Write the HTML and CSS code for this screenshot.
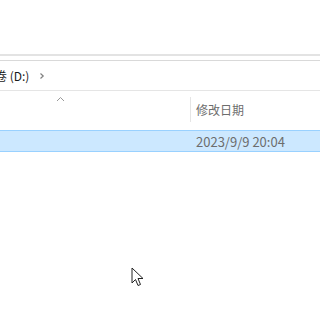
FILE: index.html
```html
<!DOCTYPE html>
<html>
<head>
<meta charset="utf-8">
<link rel="stylesheet" href="styles.css">
</head>
<body>
<div class="ribbon"></div>
<div class="gap"></div>
<div class="address">
  <span class="crumb">卷 (D:)</span>
  <svg class="chev" width="6" height="8" viewBox="0 0 6 8"><path d="M1.5 1.5 L4.2 4 L1.5 6.5" fill="none" stroke="#808080" stroke-width="1.2"/></svg>
</div>
<div class="header">
  <div class="col-name">
    <svg class="sort" width="9" height="6" viewBox="0 0 9 6"><path d="M1 5 L4.5 1.5 L8 5" fill="none" stroke="#999" stroke-width="1"/></svg>
  </div>
  <div class="col-date">修改日期</div>
</div>
<div class="row selected">
  <div class="col-name"></div>
  <div class="col-date">2023/9/9 20:04</div>
</div>
<div class="canvas">
  <svg class="cursor" width="14" height="21" viewBox="0 0 14 21"><path d="M1 1 L1 16 L4.5 12.5 L7 18.5 L9.5 17.5 L7 11.5 L12 11.5 Z" fill="#fff" stroke="#222" stroke-width="1" stroke-linejoin="miter"/></svg>
</div>
</body>
</html>
```

FILE: styles.css
```css
html, body {
  margin: 0;
  padding: 0;
  background: #fff;
  width: 320px;
  height: 320px;
  overflow: hidden;
  font-family: "Noto Sans CJK SC", "Noto Sans", sans-serif;
  font-size: 12px;
  color: #1a1a1a;
}
.ribbon {
  height: 54px;
  border-bottom: 2px solid #e3e3e3;
}
.gap {
  height: 4px;
}
.address {
  height: 29px;
  border-top: 1px solid #d9d9d9;
  border-bottom: 1px solid #e5e5e5;
  display: flex;
  align-items: center;
  margin-left: -5px;
  gap: 10px;
}
.crumb {
  font-size: 12px;
  color: #1a1a1a;
}
.chev {
  display: block;
}
.header {
  height: 39px;
  display: flex;
}
.col-name {
  width: 190px;
  position: relative;
}
.sort {
  position: absolute;
  left: 56px;
  top: 5px;
}
.header .col-date {
  border-left: 1px solid #e5e5e5;
  margin: 6px 0 8px;
  padding-left: 5px;
  display: flex;
  align-items: center;
  color: #6d6d6d;
  flex: 1;
}
.row {
  height: 20px;
  display: flex;
  align-items: center;
}
.row.selected {
  background: #cce8ff;
  border-top: 1px solid #99d1ff;
  border-bottom: 1px solid #99d1ff;
}
.row .col-date {
  padding-left: 6px;
  color: #6d6d6d;
  font-size: 13px;
}
.canvas {
  position: relative;
  flex: 1;
}
.cursor {
  position: absolute;
  left: 131px;
  top: 115px;
}
```
